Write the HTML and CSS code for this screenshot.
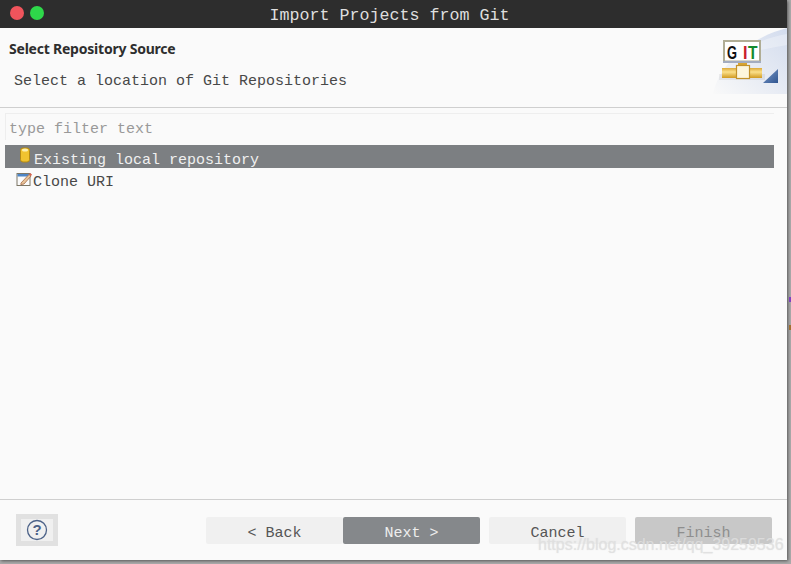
FILE: index.html
```html
<!DOCTYPE html>
<html lang="en">
<head>
<meta charset="utf-8">
<title>Import Projects from Git</title>
<link rel="stylesheet" href="styles.css">
</head>
<body>
<div class="window">
  <header class="titlebar">
    <div class="lights"><span class="light red"></span><span class="light green"></span></div>
    <div class="title">Import Projects from Git</div>
  </header>
  <section class="banner">
    <div class="banner-text">
      <h1 class="heading">Select Repository Source</h1>
      <p class="desc">Select a location of Git Repositories</p>
    </div>
    <svg class="banner-art" width="74" height="66" viewBox="0 0 74 66">
      <defs>
        <linearGradient id="wash" x1="0" y1="1" x2="1" y2="0"><stop offset="0" stop-color="#f9f9f9"/><stop offset="1" stop-color="#d3dcee"/></linearGradient>
        <linearGradient id="pipe" x1="0" y1="0" x2="0" y2="1"><stop offset="0" stop-color="#dca93a"/><stop offset=".4" stop-color="#fbe08a"/><stop offset="1" stop-color="#d19a20"/></linearGradient>
        <linearGradient id="tri" x1="0" y1="0" x2="1" y2="1"><stop offset="0" stop-color="#7f9ccb"/><stop offset="1" stop-color="#2f5590"/></linearGradient>
      </defs>
      <path d="M0 66C6 36 36 10 74 0V66Z" fill="url(#wash)"/>
      <path d="M22 30C36 24 56 20 74 17V6C52 10 34 18 22 30Z" fill="#fff" opacity=".3"/>
      <rect x="6" y="46" width="46" height="6" fill="#000" opacity=".06"/>
      <rect x="11" y="13" width="36" height="20.500" fill="#fff" stroke="#b0ad95" stroke-width="2"/>
      <rect x="10" y="33" width="38" height="2" fill="#a3acc0"/>
      <text class="git-letter" x="14" y="30.500" textLength="10" lengthAdjust="spacingAndGlyphs" fill="#111">G</text>
      <text class="git-letter" x="30" y="30.500" textLength="4.500" lengthAdjust="spacingAndGlyphs" fill="#c8202c">I</text>
      <text class="git-letter" x="35" y="30.500" textLength="9.500" lengthAdjust="spacingAndGlyphs" fill="#128a2e">T</text>
      <rect x="9" y="40" width="40" height="10" fill="url(#pipe)"/>
      <rect x="25" y="35" width="9" height="3" fill="#d9a430"/>
      <rect x="23.500" y="37.500" width="13" height="13" fill="#fdf6dc" stroke="#c2922a" stroke-width="1.200"/>
      <path d="M50 55L65 41V55Z" fill="url(#tri)"/>
    </svg>
  </section>
  <main class="content">
    <div class="filter">type filter text</div>
    <ul class="tree">
      <li class="row selected">
        <svg class="icon-repo" width="12" height="16" viewBox="0 0 12 16"><rect x="1.500" y="1" width="9" height="14" rx="2.500" fill="#f0c330" stroke="#b58a14"/><ellipse cx="6" cy="3" rx="3" ry="1.500" fill="#fdf0b0"/></svg>
        <span>Existing local repository</span>
      </li>
      <li class="row">
        <svg class="icon-clone" width="17" height="16" viewBox="0 0 17 16"><rect x="1" y="2.500" width="13" height="12" fill="#fbfbfb" stroke="#7d7766"/><rect x="1.500" y="3" width="12" height="2.500" fill="#4f86c6"/><path d="M5 12L13 3.500l2 1.500-7 8-3.200.6Z" fill="#e8c49a" stroke="#a66b46" stroke-width=".8"/><path d="M13 3.500l1-1.500 2 1.500-1 1.500Z" fill="#d9604c"/></svg>
        <span>Clone URI</span>
      </li>
    </ul>
  </main>
  <footer class="footer">
    <button class="help" type="button" aria-label="Help">
      <svg width="22" height="22" viewBox="0 0 22 22"><circle cx="11" cy="11" r="9.500" fill="none" stroke="#4c6288" stroke-width="1.300"/><text class="help-mark" x="11" y="16" text-anchor="middle">?</text></svg>
    </button>
    <div class="actions">
      <button class="btn" type="button">&lt; Back</button>
      <button class="btn primary" type="button">Next &gt;</button>
      <button class="btn cancel" type="button">Cancel</button>
      <button class="btn disabled" type="button">Finish</button>
    </div>
  </footer>
</div>
<span class="desk-mark purple"></span>
<span class="desk-mark amber"></span>
<div class="watermark">https://blog.csdn.net/qq_39259536</div>
</body>
</html>
```
FILE: styles.css
```css
* { box-sizing: border-box; }
html, body { margin: 0; height: 100%; }
body {
  width: 791px;
  height: 564px;
  overflow: hidden;
  background: #ababab;
  position: relative;
  font-family: "Liberation Mono", monospace;
}
.window {
  width: 787px;
  height: 560px;
  display: flex;
  flex-direction: column;
  background: #fafafa;
  box-shadow: 1px 1px 3px rgba(0,0,0,.5);
}
.titlebar {
  height: 28px;
  background: #2d2d2d;
  position: relative;
  display: flex;
  align-items: center;
  justify-content: center;
  flex: none;
}
.lights { position: absolute; left: 10px; top: 6px; display: flex; gap: 6px; }
.light { width: 14px; height: 14px; border-radius: 50%; }
.red { background: #f0545c; }
.green { background: #2ed84a; }
.title { color: #dedede; font-size: 16.670px; line-height: 32px; height: 28px; margin-left: -8px; }
.banner {
  height: 80px;
  flex: none;
  display: flex;
  justify-content: space-between;
  align-items: flex-start;
  border-bottom: 1px solid #cfcfcf;
}
.banner-text { padding: 12px 0 0 9px; }
.heading {
  margin: 0;
  font: 700 14px/18px "Noto Sans", sans-serif;
  color: #2e2e2e;
  letter-spacing: -.22px;
}
.desc { margin: 15px 0 0 5px; font-size: 15px; line-height: 18px; color: #484848; }
.banner-art { flex: none; display: block; }
.git-letter { font: 700 18px "Liberation Sans", sans-serif; }
.content { flex: 1; padding: 5px 13px 0 5px; min-height: 0; }
.filter {
  height: 27px;
  padding-left: 3px;
  font-size: 15px;
  line-height: 31px;
  color: #999999;
  border-top: 1px solid #eeeeee;
  border-left: 1px solid #eeeeee;
}
.tree { list-style: none; margin: 5px 0 0; padding: 0; }
.row {
  height: 22px;
  display: flex;
  align-items: center;
  font-size: 15px;
  line-height: 22px;
  color: #484848;
  padding-left: 11px;
}
.row span { position: relative; top: 2px; }
.row.selected { height: 23px; background: #7c7f82; color: #f0f0f0; padding-left: 14px; }
.row.selected span { top: 4px; }
.row + .row { margin-top: 2px; }
.icon-repo { flex: none; margin: -3px 3px 0 0; }
.icon-clone { flex: none; margin: -4px 0 0 0; }
.footer {
  height: 61px;
  flex: none;
  border-top: 1px solid #cfcfcf;
  display: flex;
  align-items: flex-start;
  justify-content: space-between;
  padding: 14px 15px 0 16px;
}
.help {
  width: 42px;
  height: 32px;
  padding: 0;
  border: 5px solid #e1e1e1;
  background: #f0f0f0;
  display: flex;
  align-items: center;
  justify-content: center;
}
.help-mark { font: 700 15px "Liberation Sans", sans-serif; fill: #4c6288; }
.actions { display: flex; margin-top: 3px; }
.btn {
  width: 137px;
  height: 27px;
  padding: 5px 0 0;
  border: 0;
  border-radius: 2px;
  background: #f0f0f0;
  color: #555555;
  font-family: "Liberation Mono", monospace;
  font-size: 15px;
  line-height: 24px;
}
.primary { background: #85888b; color: #eeeeee; }
.cancel { margin-left: 9px; }
.disabled { margin-left: 9px; background: #c8c8c8; color: #8e8e8e; }
.desk-mark { position: absolute; left: 789px; width: 2px; }
.purple { top: 297px; height: 5px; background: #8040c0; }
.amber { top: 325px; height: 5px; background: #a07030; }
.watermark {
  position: absolute;
  left: 538px;
  top: 535px;
  font: 16px/20px "Liberation Sans", sans-serif;
  color: rgba(225,225,225,.8);
  text-shadow: 0 0 1px rgba(200,200,200,.5);
  white-space: nowrap;
}
```
